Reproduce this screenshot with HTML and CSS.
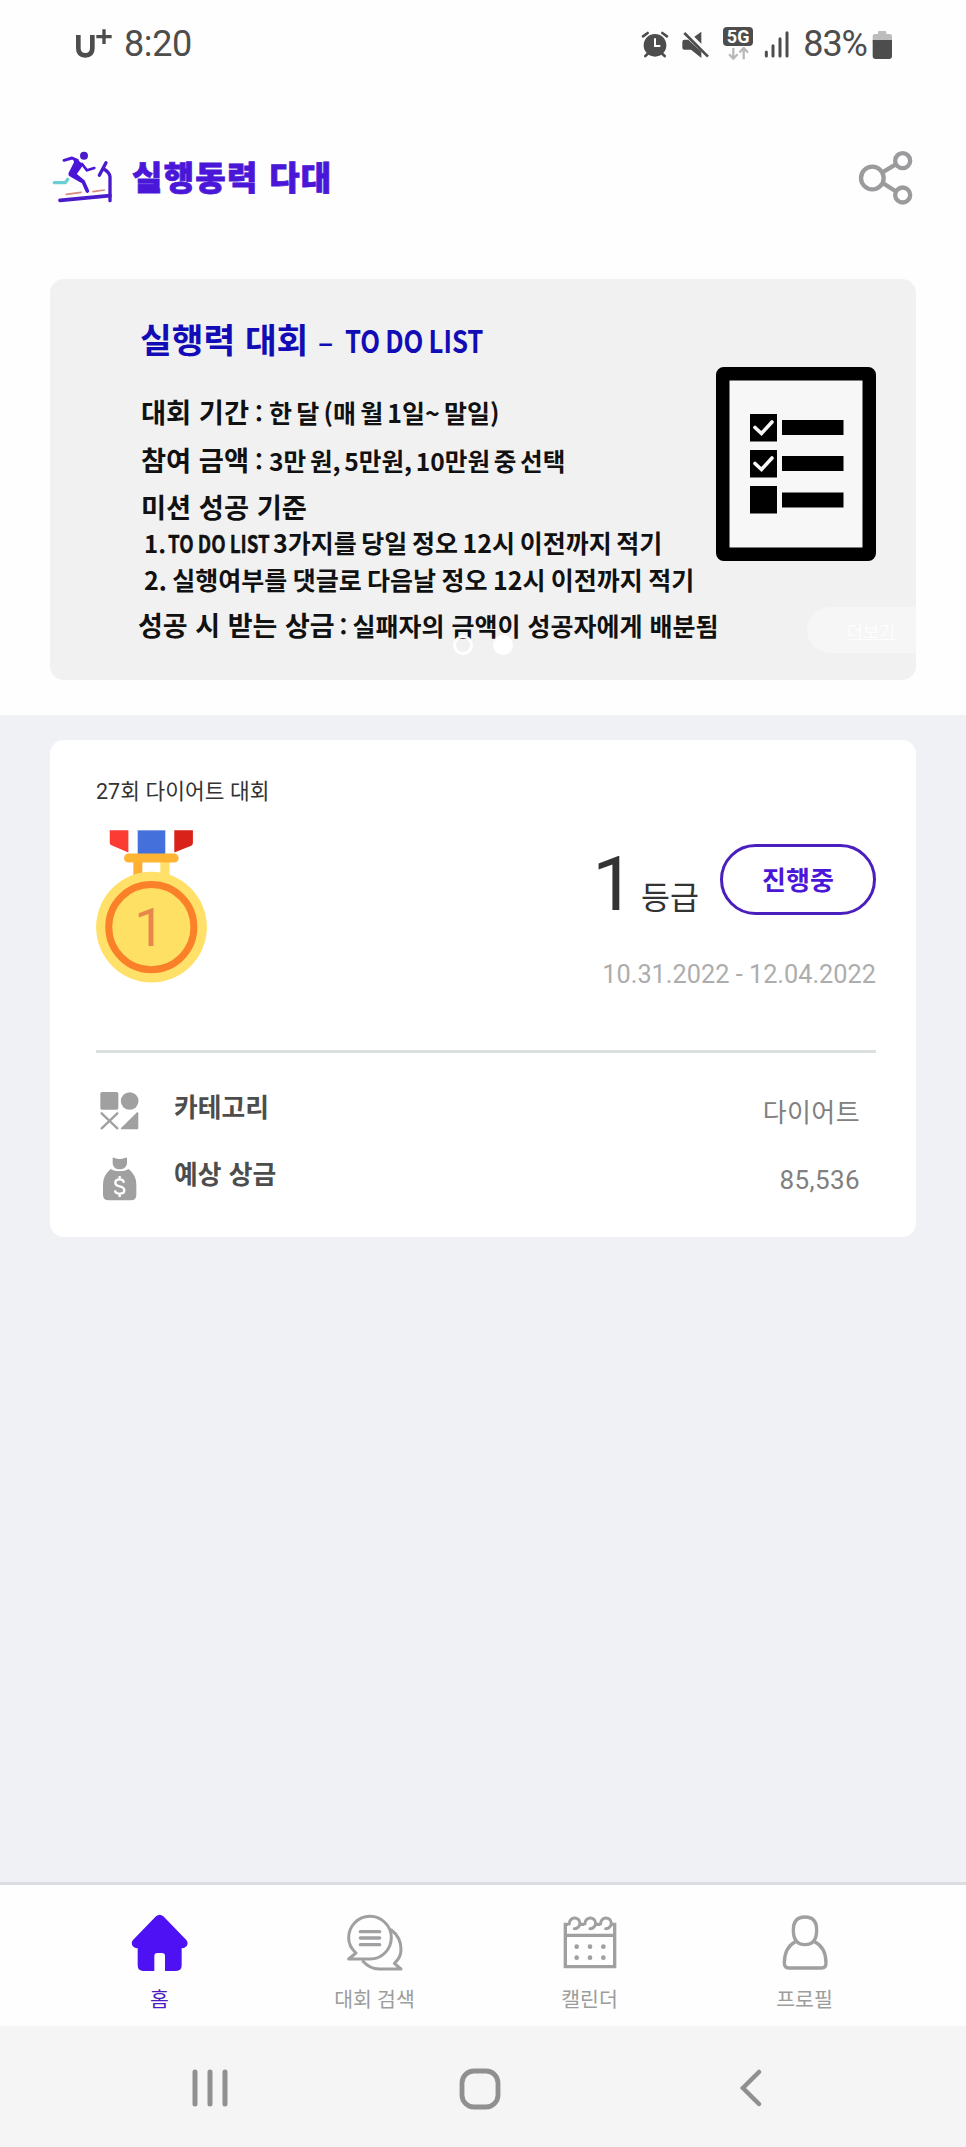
FILE: index.html
```html
<!DOCTYPE html>
<html lang="ko">
<head>
<meta charset="utf-8">
<title>실행동력 다대</title>
<link rel="stylesheet" href="styles.css">
</head>
<body>
<div class="app">
  <div class="status">
    <svg class="carrier" viewBox="225 84 114 93"><path d="M235 105V145Q235 166 256 166Q277 166 277 145V105" fill="none" stroke="#4d4d4d" stroke-width="14"/><path d="M289 110H335M312 88V132" stroke="#4d4d4d" stroke-width="10"/></svg>
    <span class="clock">8:20</span>
    <span class="spacer"></span>
    <svg class="alarm" viewBox="126 90 84 87"><circle cx="168" cy="136" r="34" fill="#4d4d4d"/><path d="M132 109L146 99M204 109L190 99M148 160L139 168M188 160L197 168" stroke="#4d4d4d" stroke-width="8" stroke-linecap="round"/><path d="M168 115V138H184" fill="none" stroke="#fff" stroke-width="6"/></svg>
    <svg class="mute" viewBox="246 90 84 87"><path d="M284 112L307 95V136ZM256 119H268L307 155V174L276 149H256Q250 149 250 143V126Q250 119 256 119Z" fill="#4d4d4d"/><path d="M262 93L333 164" stroke="#fefefe" stroke-width="9"/><path d="M256 99L327 170" stroke="#4d4d4d" stroke-width="8"/></svg>
    <span class="net"><span class="net-type">5G</span><svg class="net-arrows" viewBox="380 139 76 40"><path d="M402 142V173M389 161L402 175L415 161M434 177V144M421 156L434 142L447 156" fill="none" stroke="#b8b8b8" stroke-width="7"/></svg></span>
    <svg class="signal" viewBox="495 90 78 84"><path d="M502 156V168M522 137V168M543 116V168M564 98V168" stroke="#4d4d4d" stroke-width="9" stroke-linecap="round"/></svg>
    <span class="percent">83%</span>
    <svg class="battery" viewBox="819 90 63 90"><path d="M821 124V108Q821 102 828 102H837V97Q837 93 841 93H858Q862 93 862 97V102H872Q879 102 879 108V124Z" fill="#bdbdbd"/><path d="M821 120H879V168Q879 177 870 177H830Q821 177 821 168Z" fill="#4d4d4d"/></svg>
  </div>

  <header class="header">
    <svg class="logo" viewBox="156 450 186 162">
      <g fill="none" stroke-linecap="round" stroke-linejoin="round">
        <path d="M163 548H196L203 538" stroke="#69cfd3" stroke-width="10"/>
        <path d="M199 583L243 577M279 575L313 570" stroke="#d98a80" stroke-width="5"/>
        <path d="M180 601L330 587" stroke="#4a1bc9" stroke-width="11"/>
        <path d="M330 602V530Q328 516 311 507M318 488L298 526" stroke="#4a1bc9" stroke-width="10"/>
        <path d="M192 481L216 474L232 481" stroke="#4a17d8" stroke-width="9"/>
        <path d="M246 492L261 511L283 504" stroke="#4a17d8" stroke-width="8"/>
        <path d="M224 524L249 544L262 573" stroke="#4a17d8" stroke-width="11"/>
      </g>
      <path d="M218 472Q238 480 250 494L230 523Q240 532 252 542L244 549L209 529Q203 525 206 518L222 487Z" fill="#4a17d8"/>
      <circle cx="252" cy="467" r="12" fill="#4a1bc9"/>
    </svg>
    <h1 class="brand">실행동력 다대</h1>
    <svg class="share" viewBox="774 450 168 168" fill="none" stroke="#9b9b9d" stroke-width="13"><path d="M851 515L886 494M851 551L886 573"/><circle cx="817" cy="534" r="34"/><circle cx="908" cy="482" r="22.5"/><circle cx="908" cy="585" r="22.5"/></svg>
  </header>

  <section class="hero">
    <div class="banner">
      <div class="banner-text">
        <h2 class="b-title"><span class="bt-ko">실행력 대회</span><span class="bt-dash">–</span><span class="bt-en">TO DO LIST</span></h2>
        <p class="b-line l1"><span class="lead">대회 기간</span><span class="colon">:</span><span class="rest r1">한 달 (매 월 1일~ 말일)</span></p>
        <p class="b-line l2"><span class="lead">참여 금액</span><span class="colon">:</span><span class="rest r2">3만 원, 5만원, 10만원 중 선택</span></p>
        <p class="b-line l3"><span class="lead">미션 성공 기준</span></p>
        <p class="b-line l4"><span class="rest n4">1.</span><span class="rest en4">TO DO LIST</span><span class="rest r4">3가지를 당일 정오 12시 이전까지 적기</span></p>
        <p class="b-line l5"><span class="rest r5">2. 실행여부를 댓글로 다음날 정오 12시 이전까지 적기</span></p>
        <p class="b-line l6"><span class="lead">성공 시 받는 상금</span><span class="colon">:</span><span class="rest r6">실패자의 금액이 성공자에게 배분됨</span></p>
      </div>
      <svg class="checklist" viewBox="0 0 160 194"><rect x="6.75" y="6.75" width="146.5" height="180.5" rx="1" fill="#f7f7f7" stroke="#000" stroke-width="13.5" stroke-linejoin="round"/><path d="M34 47h27v27.500h-27zM34 83h27v27.500h-27zM34 119h27v27.500h-27zM66 53h61.500v15h-61.500zM66 89h61.500v15h-61.500zM66 125.500h61.500v15h-61.500z"/><path d="M39 60.500L45.500 66.500L56 55M39 96.500L45.500 102.500L56 91" fill="none" stroke="#f7f7f7" stroke-width="3.600" stroke-linecap="round"/></svg>
      <a class="more">더보기</a>
      <div class="dots"><i class="dot"></i><i class="dot on"></i></div>
    </div>
  </section>

  <main class="content">
    <article class="card">
      <h3 class="card-title">27회 다이어트 대회</h3>
      <div class="card-main">
        <svg class="medal" viewBox="167 299 333 460">
          <path d="M208 300H264V367L213 345Q208 343 208 338Z" fill="#fd3b35"/><path d="M402 300H458V338Q458 343 453 346L402 367Z" fill="#d92219"/><path d="M292 300H375V372H292Z" fill="#4470db"/>
          <path d="M279 390H306V440H279Z" fill="#ffae32"/><path d="M360 390H388V440H360Z" fill="#ffe169"/>
          <rect x="251" y="370" width="164" height="27" rx="13" fill="#ffb432"/>
          <circle cx="333.500" cy="591" r="166.500" fill="#ffe169"/><circle cx="333" cy="591" r="128" fill="#fee065" stroke="#fa8029" stroke-width="21"/>
          <text class="medal-num" x="327" y="649" text-anchor="middle">1</text>
        </svg>
        <div class="result">
          <div class="grade"><span class="grade-num">1</span><span class="grade-unit">등급</span><span class="state">진행중</span></div>
          <div class="dates">10.31.2022 - 12.04.2022</div>
        </div>
      </div>
      <dl class="facts">
        <div class="fact">
          <svg class="fact-icon" viewBox="180 185 120 132"><g fill="#a0a0a0"><rect x="181" y="188" width="54" height="53" rx="5"/><circle cx="269" cy="215" r="26.500"/><path d="M291 249Q295 247 295 252V296Q295 300 291 300H246Q240 300 244 295Z"/></g><path d="M185 252L232 297M232 252L185 297" stroke="#a0a0a0" stroke-width="7" stroke-linecap="round"/></svg>
          <dt>카테고리</dt><dd>다이어트</dd>
        </div>
        <div class="fact">
          <svg class="fact-icon bag" viewBox="180 380 120 132"><path d="M218 384Q217 380 222 382Q239 390 256 382Q261 380 261 384V400Q257 417 239 417Q221 417 218 400ZM212 416Q222 423 239 423Q256 423 266 416Q289 435 289 462V494Q289 510 273 510H206Q189 510 189 494V462Q189 435 212 416Z" fill="#a0a0a0"/><path d="M252 457Q250 447 239 447Q226 447 226 457Q226 465 239 468Q253 471 253 480Q253 490 239 490Q226 490 225 480M239 437V447M239 490V500" fill="none" stroke="#fff" stroke-width="7"/></svg>
          <dt>예상 상금</dt><dd>85,536</dd>
        </div>
      </dl>
    </article>
  </main>

  <nav class="tabs">
    <a class="tab active"><svg class="tab-icon" viewBox="94 132 174 174"><path d="M169 139Q180 130 191 139L260 210Q267 218 261 228Q255 236 246 234V286Q246 303 229 303H196V258Q196 249 187 249H173Q164 249 164 258V303H131Q114 303 114 286V234Q105 236 99 228Q93 218 100 210Z" fill="#4d11f3"/></svg><span>홈</span></a>
    <a class="tab"><svg class="tab-icon" viewBox="738 132 174 174" fill="none" stroke="#a0a0a2" stroke-width="9" stroke-linejoin="round" stroke-linecap="round"><path d="M746 267L768 249Q746 229 746 204A64 64 0 1 1 810 267Z"/><path d="M874 180Q903 202 903 238Q903 264 883 280L903 297H838Q809 297 789 274"/><path d="M781 185H839M781 204H839M781 224H839" stroke-width="10"/></svg><span>대회 검색</span></a>
    <a class="tab"><svg class="tab-icon" viewBox="185 132 174 174" fill="none" stroke="#a0a0a2" stroke-width="10"><path d="M207 163H198V290H346V163H337M243 163H254M290 163H302M198 196H346"/><path d="M210 162A16 16 0 1 1 225 176M257 162A16 16 0 1 1 272 176M304 162A16 16 0 1 1 319 176" stroke-width="9" stroke-linecap="round"/><path d="M232 230h.1M272 230h.1M312 230h.1M232 263h.1M272 263h.1M312 263h.1" stroke-width="14" stroke-linecap="round"/></svg><span>캘린더</span></a>
    <a class="tab"><svg class="tab-icon" viewBox="828 132 174 174" fill="none" stroke="#a0a0a2" stroke-width="10"><path d="M880 180Q880 141 915 141Q950 141 950 180Q950 224 915 224Q880 224 880 180Z"/><path d="M886 215Q853 232 853 279Q853 294 867 294H965Q978 294 978 279Q978 232 944 215"/></svg><span>프로필</span></a>
  </nav>

  <div class="sysnav">
    <svg class="sys recents" viewBox="0 0 37 38"><path d="M3 3V35M18 3V35M33 3V35" stroke="#909090" stroke-width="5" stroke-linecap="round"/></svg>
    <svg class="sys home" viewBox="0 0 42 42"><rect x="3" y="3" width="36" height="36" rx="12" fill="none" stroke="#909090" stroke-width="4.800"/></svg>
    <svg class="sys back" viewBox="0 0 22 38"><path d="M19 3L3 19L19 35" fill="none" stroke="#909090" stroke-width="4.500" stroke-linecap="round"/></svg>
  </div>
</div>
</body>
</html>
```
FILE: styles.css
```css
* { box-sizing: border-box; margin: 0; padding: 0; }
body { background: #fefefe; font-family: Roboto, "Noto Sans CJK KR", sans-serif; color: #333; }
svg { display: block; flex: none; }
.app { width: 966px; height: 2147px; display: flex; flex-direction: column; background: #fefefe; white-space: nowrap; overflow: hidden; }

/* status bar */
.status { height: 88px; padding: 27px 73px 0 75px; display: flex; align-items: flex-start; color: #4d4d4d; }
.carrier { width: 38px; height: 31px; margin-top: 1px; }
.clock { font-size: 36px; line-height: 36px; margin: -1px 0 0 11px; letter-spacing: -0.4px; }
.spacer { flex: 1; }
.alarm { width: 28px; height: 29px; margin: 3px 12px 0 0; }
.mute { width: 28px; height: 29px; margin: 3px 14px 0 0; }
.net { width: 30px; display: flex; flex-direction: column; align-items: center; margin-right: 11px; }
.net-type { width: 30px; height: 19px; border-radius: 4px; background: #4d4d4d; color: #fff; font-weight: 700; font-size: 18px; line-height: 20px; text-align: center; }
.net-arrows { width: 25px; height: 13px; margin-top: 1px; }
.signal { width: 26px; height: 28px; margin: 3px 13px 0 0; }
.percent { font-size: 36px; line-height: 36px; margin: -1px 5px 0 0; letter-spacing: -1px; }
.battery { width: 21px; height: 30px; margin-top: 3px; }

/* app header */
.header { height: 191px; padding: 62px 52px 0; display: flex; align-items: flex-start; }
.logo { width: 62px; height: 54px; }
.brand { margin: -1px 0 0 18px; font: 900 33px/54px "Noto Sans CJK KR", sans-serif; color: #4a17d8; letter-spacing: 1.3px; -webkit-text-stroke: 0.8px #4a17d8; }
.share { width: 56px; height: 56px; margin-left: auto; }

/* banner */
.hero { height: 436px; padding: 0 50px; }
.banner { position: relative; height: 401px; border-radius: 14px; background: #f1f1f1; overflow: hidden; display: flex; font-family: "Noto Sans CJK KR", sans-serif; font-weight: 700; color: #111; }
.banner-text { width: 666px; padding-left: 88px; }
.b-title { display: flex; align-items: baseline; margin-top: 37px; height: 44px; line-height: 44px; color: #110cb5; padding-left: 2px; }
.bt-ko { font-size: 34.500px; width: 178px; }
.bt-dash { font-size: 28px; width: 27px; }
.bt-en { font-size: 31px; word-spacing: -2.5px; transform: scaleX(0.83); transform-origin: left; }
.b-line { display: flex; align-items: baseline; height: 24px; line-height: 24px; }
.b-line span { flex: none; }
.lead { font-size: 27.300px; font-weight: 600; }
.colon { font-size: 24px; width: 20px; padding-left: 6px; }
.rest { font-size: 25px; }
.l1 { margin-top: 39px; padding-left: 3px; }
.l2 { margin-top: 24px; padding-left: 3px; }
.l3 { margin-top: 23px; padding-left: 3px; }
.l4 { margin-top: 12px; padding-left: 6px; }
.l5 { margin-top: 13px; padding-left: 6px; }
.l6 { margin-top: 22px; }
.l6 .lead { font-size: 27px; }
.l6 .colon { width: 18px; padding-left: 5px; }
.r1 { word-spacing: -2.8px; }
.rest.r2 { font-size: 24.600px; word-spacing: -3.2px; }
.r4 { word-spacing: -2.4px; }
.r5 { word-spacing: -1.6px; }
.rest.n4 { width: 24px; font-size: 24px; }
.rest.en4 { width: 105px; font-size: 23.500px; word-spacing: -1.5px; transform: scaleX(0.8); transform-origin: left; -webkit-text-stroke: 0.4px #111; }
.checklist { width: 160px; height: 194px; margin-top: 88px; }
.more { position: absolute; left: 757px; top: 328px; width: 130px; height: 46px; padding-left: 40px; border-radius: 24px; background: #f6f6f6; color: #fdfdfd; font-weight: 400; font-size: 17.5px; line-height: 47px; text-decoration: underline; }
.dots { position: absolute; left: 403px; top: 356px; display: flex; gap: 20px; }
.dot { width: 20px; height: 20px; border-radius: 50%; border: 3px solid #fff; }
.on { background: #fff; }

/* contest card */
.content { flex: 1; background: #eff1f4; padding: 25px 50px 0; }
.card { height: 497px; border-radius: 14px; background: #fff; padding: 34px 40px 0 46px; }
.card-title { font-weight: 400; font-size: 21.400px; line-height: 35px; color: #333; letter-spacing: 0.1px; }
.card-main { display: flex; justify-content: space-between; margin-top: 21px; height: 223px; border-bottom: 3px solid #dcdfdf; }
.medal { width: 111px; height: 153px; }
.medal-num { font-family: Roboto, sans-serif; font-size: 162px; fill: #e8874c; }
.result { display: flex; flex-direction: column; align-items: flex-end; padding-top: 14px; }
.grade { display: flex; align-items: flex-start; height: 71px; }
.grade-num { font-size: 76px; line-height: 81px; margin-right: 6px; }
.grade-unit { font-size: 31.500px; line-height: 46px; padding-top: 32px; margin-right: 21px; }
.state { width: 156px; height: 71px; border: 3px solid #4b1fbd; border-radius: 36px; color: #4a17d8; font: 700 26px/64px "Noto Sans CJK KR", sans-serif; text-align: center; }
.dates { margin-top: 44px; font-size: 25.300px; line-height: 32px; color: #adadad; }
.facts { padding: 38px 16px 0 4px; }
.fact { display: flex; align-items: flex-start; height: 67px; }
.fact-icon { width: 40px; height: 44px; }
.bag { margin-top: -1px; }
.fact dt { margin: -3px 0 0 34px; font: 700 25.800px/36px "Noto Sans CJK KR", sans-serif; color: #4d4d4d; }
.fact dd { margin: 4px 0 0 auto; font-size: 26px; line-height: 36px; color: #808080; letter-spacing: 0.4px; }

/* bottom tabs */
.tabs { height: 144px; border-top: 3px solid #dcdde2; padding: 29px 54px 0 52px; display: flex; background: #fefefe; }
.tab { flex: 1; display: flex; flex-direction: column; align-items: center; font-size: 20.500px; line-height: 30px; color: #9c9c9c; }
.tab-icon { width: 58px; height: 58px; margin-bottom: 13px; }
.tab.active { color: #4d1cc0; }

/* system navigation */
.sysnav { height: 121px; background: #f5f5f5; padding: 42px 204px 0 192px; display: flex; justify-content: space-between; align-items: flex-start; }
.recents { width: 37px; height: 38px; margin-top: 1px; }
.home { width: 42px; height: 42px; margin-right: 9px; }
.back { width: 22px; height: 38px; margin-top: 1px; }
```
